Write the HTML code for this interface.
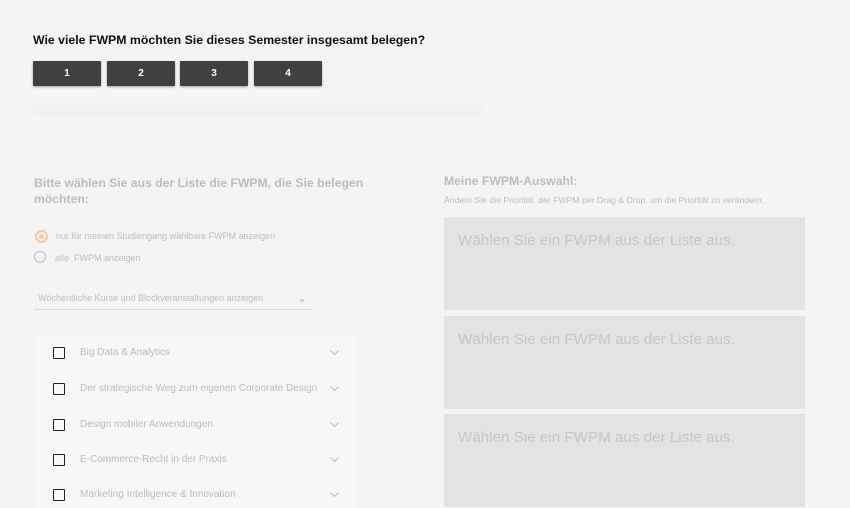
<!DOCTYPE html>
<html><head><meta charset="utf-8"><style>
html,body{margin:0;width:850px;height:508px;overflow:hidden}
body{background:#f4f4f4;font-family:"Liberation Sans",Arial,sans-serif;position:relative}
.a{position:absolute;white-space:nowrap}
.btn{position:absolute;top:61px;height:25px;width:68px;background:#404040;color:#fff;font-size:10px;font-weight:bold;text-align:center;line-height:25px;box-shadow:0 1px 2px rgba(0,0,0,.35);border-radius:1px}
.box{position:absolute;left:444px;width:361px;height:93px;background:#e3e3e3}
.box span{position:absolute;left:14px;top:15px;font-size:15.2px;color:#c6c6c6}
.row{position:absolute;left:34px;width:324px;height:36px}
.cb{position:absolute;left:19px;top:12px;width:10px;height:10px;border:1.5px solid #222;border-radius:1px}
.lbl{position:absolute;left:46px;top:12px;font-size:10px;color:#bcbcbc}
.chev{position:absolute;left:296px;top:15px}
</style></head><body>
<div class="a" style="left:33px;top:33px;font-size:12.3px;color:#111;font-weight:bold">Wie viele FWPM möchten Sie dieses Semester insgesamt belegen?</div>
<div class="btn" style="left:33px">1</div>
<div class="btn" style="left:107px">2</div>
<div class="btn" style="left:180px">3</div>
<div class="btn" style="left:254px">4</div>
<div class="a" style="left:33px;top:103px;width:449px;height:12px;background:#f1f1f1"></div>

<div class="a" style="left:34px;top:175px;font-size:12.2px;font-weight:bold;color:#bdbdbd;line-height:16px">Bitte wählen Sie aus der Liste die FWPM, die Sie belegen<br>möchten:</div>
<div class="a" style="left:35px;top:230px;width:9px;height:9px;border:2px solid #f5c8a0;border-radius:50%"><div style="margin:2px;width:5px;height:5px;background:#f5c8a0;border-radius:50%"></div></div>
<div class="a" style="left:56px;top:231px;font-size:9px;color:#bdbdbd">nur für meinen Studiengang wählbare FWPM anzeigen</div>
<div class="a" style="left:34px;top:251px;width:10px;height:10px;border:1.5px solid #bdbdbd;border-radius:50%"></div>
<div class="a" style="left:55px;top:253px;font-size:9px;color:#bdbdbd">alle&nbsp; FWPM anzeigen</div>
<div class="a" style="left:38px;top:293px;font-size:9px;color:#bdbdbd">Wöchentliche Kurse und Blockveranstaltungen anzeigen</div>
<div class="a" style="left:299px;top:299px;width:0;height:0;border-left:3.5px solid transparent;border-right:3.5px solid transparent;border-top:4px solid #f5c8a0"></div>
<div class="a" style="left:34px;top:309px;width:278px;height:1px;background:#f7d3b3"></div>

<div class="a" style="left:34px;top:335px;width:324px;height:173px;background:#f7f7f7"></div>
<div class="row" style="top:335px"><div class="cb"></div><div class="lbl">Big Data &amp; Analytics</div><svg class="chev" width="9" height="6"><path d="M.5 .5L4.5 4.5 8.5 .5" fill="none" stroke="#bbb"/></svg></div>
<div class="row" style="top:371px"><div class="cb"></div><div class="lbl">Der strategische Weg zum eigenen Corporate Design</div><svg class="chev" width="9" height="6"><path d="M.5 .5L4.5 4.5 8.5 .5" fill="none" stroke="#bbb"/></svg></div>
<div class="row" style="top:407px"><div class="cb"></div><div class="lbl">Design mobiler Anwendungen</div><svg class="chev" width="9" height="6"><path d="M.5 .5L4.5 4.5 8.5 .5" fill="none" stroke="#bbb"/></svg></div>
<div class="row" style="top:442px"><div class="cb"></div><div class="lbl">E-Commerce-Recht in der Praxis</div><svg class="chev" width="9" height="6"><path d="M.5 .5L4.5 4.5 8.5 .5" fill="none" stroke="#bbb"/></svg></div>
<div class="row" style="top:477px"><div class="cb"></div><div class="lbl">Marketing Intelligence &amp; Innovation</div><svg class="chev" width="9" height="6"><path d="M.5 .5L4.5 4.5 8.5 .5" fill="none" stroke="#bbb"/></svg></div>

<div class="a" style="left:444px;top:174px;font-size:12.2px;font-weight:bold;color:#bdbdbd">Meine FWPM-Auswahl:</div>
<div class="a" style="left:444px;top:195px;font-size:8.7px;color:#bdbdbd">Ändern Sie die Priorität&nbsp; der FWPM per Drag &amp; Drop, um die Priorität zu verändern.</div>
<div class="box" style="top:217px"><span>Wählen Sie ein FWPM aus der Liste aus.</span></div>
<div class="box" style="top:316px"><span>Wählen Sie ein FWPM aus der Liste aus.</span></div>
<div class="box" style="top:414px"><span>Wählen Sie ein FWPM aus der Liste aus.</span></div>
</body></html>
